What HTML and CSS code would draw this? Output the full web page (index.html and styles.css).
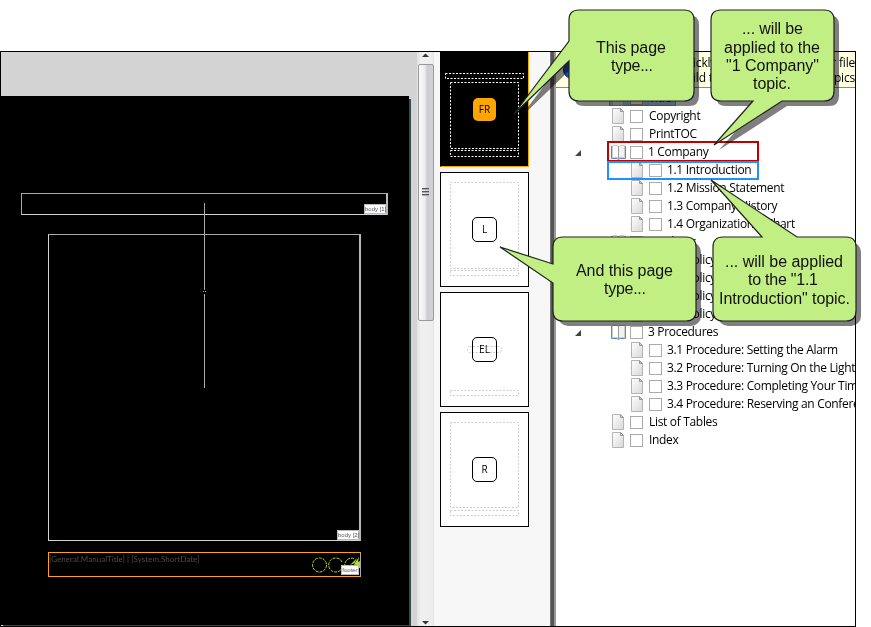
FILE: index.html
```html
<!DOCTYPE html>
<html lang="en">
<head>
<meta charset="utf-8">
<title>Page layout and TOC</title>
<link rel="stylesheet" href="styles.css">
</head>
<body>
<svg width="0" height="0" class="defs">
  <defs>
    <linearGradient id="sheet" x1="0" y1="0" x2="1" y2="1"><stop offset="0" stop-color="#fff"/><stop offset="1" stop-color="#d8d8d8"/></linearGradient>
    <symbol id="doc" viewBox="0 0 13 16"><path d="M.5 .5H8.500L11.500 3.500V15.500H.5Z" fill="url(#sheet)" stroke="#b4b4b4"/><path d="M8.500 .5V3.500H11.500Z" fill="#d0d0d0" stroke="#999"/></symbol>
    <symbol id="book" viewBox="0 0 15 16"><path d="M.5 2V14.500H6L7.500 15.500L9 14.500H14.500V2" fill="#eee" stroke="#5b8cc0"/><path d="M1.500 1.500H6L7.500 2.500V14.500L6 13.500H1.500Z" fill="#fff" stroke="#ccc"/><path d="M13.500 1.500H9L7.500 2.500V14.500L9 13.500H13.500Z" fill="#f1f1f1" stroke="#ccc"/><path d="M7.500 2V15.500" stroke="#999"/></symbol>
  </defs>
</svg>
<main class="window">
  <section class="canvas">
    <div class="page">
      <div class="frame body1"><span class="tag">body [1]</span></div>
      <div class="frame body2"><span class="tag">body [2]</span></div>
      <div class="frame footer">
        <span class="vars">[General.ManualTitle] | [System.ShortDate]</span>
        <svg class="rings" width="50" height="18" viewBox="0 0 50 18"><g fill="none" stroke="#b5d334" stroke-dasharray="3 1"><circle cx="8.500" cy="9" r="7"/><path d="M31 6A7 7 0 1 0 31 12"/><path d="M34 11A7 7 0 0 1 43 2.500"/></g><path d="M39 9L46 2L43 8L48 1L47 6L49 5V12H42L44 7Z" fill="#b5d334"/></svg>
        <span class="tag">footer</span>
      </div>
      <i class="divider"></i>
    </div>
  </section>
  <div class="scroll">
    <svg width="17" height="12" viewBox="0 0 17 12"><path d="M5 5L8.500 1.500L12 5Z" fill="#333"/></svg>
    <div class="thumb"><i></i><i></i><i></i></div>
    <svg class="down" width="17" height="6" viewBox="0 0 17 6"><path d="M5 1H12L8.500 4.500Z" fill="#333"/></svg>
  </div>
  <section class="cards">
    <div class="card first"><svg width="87" height="114"><g class="dash"><rect x="4.500" y="21.500" width="78" height="5"/><rect x="9.500" y="30.500" width="68" height="66"/><rect x="9.500" y="98.500" width="68" height="6"/></g></svg><b>FR</b></div>
    <div class="card"><svg width="87" height="113"><g class="dash"><rect x="9.500" y="9.500" width="68" height="86"/><rect x="9.500" y="97.500" width="68" height="5"/></g></svg><b>L</b></div>
    <div class="card"><svg width="87" height="113"><g class="dash"><rect x="9.500" y="97.500" width="68" height="5"/></g></svg><b>EL</b><svg class="under" width="87" height="113"><g class="dash"><rect x="26.500" y="53.500" width="34" height="6" rx="2"/></g></svg></div>
    <div class="card"><svg width="87" height="113"><g class="dash"><rect x="9.500" y="9.500" width="68" height="85"/><rect x="9.500" y="97.500" width="68" height="5"/></g></svg><b>R</b></div>
  </section>
  <div class="splitter"></div>
  <section class="outline">
    <header class="notice"><svg width="18" height="18" viewBox="0 0 18 18"><circle cx="9" cy="9" r="8.500" fill="#2448b8" stroke="#102a80"/></svg>
      <div class="lines"><p><span>ickly</span><span>r file</span></p><p><span>ild t</span><span>opics</span></p></div></header>
    <ul class="tree">
      <li><span class="sel"></span><svg class="doc"><use href="#doc"/></svg><i></i><span>Title</span></li>
      <li><svg class="doc"><use href="#doc"/></svg><i></i><span>Copyright</span></li>
      <li><svg class="doc"><use href="#doc"/></svg><i></i><span>PrintTOC</span></li>
      <li class="open"><svg class="book"><use href="#book"/></svg><i></i><span>1 Company</span></li>
      <li class="sub"><svg class="doc"><use href="#doc"/></svg><i></i><span>1.1 Introduction</span></li>
      <li class="sub"><svg class="doc"><use href="#doc"/></svg><i></i><span>1.2 Mission Statement</span></li>
      <li class="sub"><svg class="doc"><use href="#doc"/></svg><i></i><span>1.3 Company History</span></li>
      <li class="sub"><svg class="doc"><use href="#doc"/></svg><i></i><span>1.4 Organizational Chart</span></li>
      <li class="open"><svg class="book"><use href="#book"/></svg><i></i><span>2 Policies</span></li>
      <li class="sub"><svg class="doc"><use href="#doc"/></svg><i></i><span>2.1 Policy</span></li>
      <li class="sub"><svg class="doc"><use href="#doc"/></svg><i></i><span>2.2 Policy</span></li>
      <li class="sub"><svg class="doc"><use href="#doc"/></svg><i></i><span>2.3 Policy</span></li>
      <li class="sub"><svg class="doc"><use href="#doc"/></svg><i></i><span>2.4 Policy</span></li>
      <li class="open"><svg class="book"><use href="#book"/></svg><i></i><span>3 Procedures</span></li>
      <li class="sub"><svg class="doc"><use href="#doc"/></svg><i></i><span>3.1 Procedure: Setting the Alarm</span></li>
      <li class="sub"><svg class="doc"><use href="#doc"/></svg><i></i><span>3.2 Procedure: Turning On the Lights</span></li>
      <li class="sub"><svg class="doc"><use href="#doc"/></svg><i></i><span>3.3 Procedure: Completing Your Time</span></li>
      <li class="sub"><svg class="doc"><use href="#doc"/></svg><i></i><span>3.4 Procedure: Reserving an Conference</span></li>
      <li><svg class="doc"><use href="#doc"/></svg><i></i><span>List of Tables</span></li>
      <li><svg class="doc"><use href="#doc"/></svg><i></i><span>Index</span></li>
    </ul>
  </section>
</main>
<svg class="callouts" width="871" height="627" viewBox="0 0 871 627">
  <rect x="608" y="142" width="150" height="19" fill="none" stroke="#c00000" stroke-width="2"/>
  <rect x="608" y="162" width="150" height="17" fill="none" stroke="#1e90ff" stroke-width="2"/>
  <g class="shade">
    <path d="M584 15H689Q699 15 699 25V96Q699 106 689 106H584Q574 106 574 96V66L519 119L574 46V25Q574 15 584 15Z"/>
    <path d="M726 15H829Q839 15 839 25V96Q839 106 829 106H787L719 150L758 106H726Q716 106 716 96V25Q716 15 726 15Z"/>
    <rect x="558" y="242" width="143" height="84" rx="10"/>
    <rect x="718" y="242" width="143" height="84" rx="10"/>
  </g>
  <g class="bubble">
    <path d="M579 10H684Q694 10 694 20V91Q694 101 684 101H579Q569 101 569 91V61L514 114L569 41V20Q569 10 579 10Z"/>
    <path d="M721 10H824Q834 10 834 20V91Q834 101 824 101H782L714 145L753 101H721Q711 101 711 91V20Q711 10 721 10Z"/>
    <path d="M563 237H686Q696 237 696 247V311Q696 321 686 321H563Q553 321 553 311V283L500 247L553 264V247Q553 237 563 237Z"/>
    <path d="M723 237H762L711 180L797 237H846Q856 237 856 247V311Q856 321 846 321H723Q713 321 713 311V247Q713 237 723 237Z"/>
  </g>
  <g class="says">
    <text x="596" y="53" textLength="70">This page</text><text x="611" y="71" textLength="42">type...</text>
    <text x="742" y="34" textLength="61">... will be</text><text x="724" y="53" textLength="96">applied to the</text><text x="726" y="71" textLength="93">"1 Company"</text><text x="753" y="89" textLength="38">topic.</text>
    <text x="576" y="276" textLength="97">And this page</text><text x="604" y="294" textLength="42">type...</text>
    <text x="725" y="267" textLength="118">... will be applied</text><text x="748" y="285" textLength="70">to the "1.1</text><text x="719" y="304" textLength="131">Introduction" topic.</text>
  </g>
</svg>
</body>
</html>
```

FILE: styles.css
```css
* { box-sizing: border-box; }
body { margin: 0; padding-top: 51px; background: #fff; font: 12px "Open Sans", sans-serif; color: #000; height: 627px; overflow: hidden; }
.defs { position: absolute; }
.window { display: flex; width: 856px; height: 576px; border: 1px solid #000; overflow: hidden; }
.canvas { flex: 0 0 416px; background: #d3d3d3; padding-top: 44px; overflow: hidden; }
.page { position: relative; width: 408px; height: 529px; background: #000; box-shadow: 2px 3px 0 #2f4f4f; }
.frame { position: absolute; border: 1px solid #a9a9a9; border-bottom-color: #d3d3d3; }
.body1 { left: 20px; top: 97px; width: 367px; height: 22px; border-right: 2px solid #b8b8b8; }
.body2 { left: 47px; top: 138px; width: 313px; height: 307px; border-right: 2px solid #b8b8b8; border-left-color: #d3d3d3; }
.footer { left: 47px; top: 456px; width: 313px; height: 25px; border-color: #ffa500; border-right-color: #aaa; }
.tag { position: absolute; right: 0; bottom: 0; width: 22px; height: 10px; background: #fff; border: 1px solid #bbb; font: 6px/8px "Liberation Sans", sans-serif; color: #556; text-align: center; white-space: nowrap; }
.footer .tag { width: 18px; right: 1px; bottom: 1px; z-index: 1; }
.vars { display: block; font: 8px/13px Lato, sans-serif; color: #4c4c4c; letter-spacing: .03px; white-space: nowrap; }
.rings { position: absolute; left: 262px; top: 3px; }
.divider { position: absolute; left: 203px; top: 107px; width: 1px; height: 185px; background: linear-gradient(#a9a9a9 87px, #000 87px 91px, #a9a9a9 91px); }
.divider::after { content: ""; position: absolute; left: -1px; top: 88px; width: 3px; height: 1px; background: linear-gradient(90deg, #bbb 1px, #000 1px 2px, #bbb 2px); }
.scroll { flex: 0 0 17px; display: flex; flex-direction: column; background: linear-gradient(90deg, #e2e2e2, #f0f0f0 4px, #eee 15px, #e3e3e3); }
.scroll svg { display: block; }
.thumb { width: 16px; height: 257px; margin-left: 1px; border: 1px solid #999; border-radius: 2px; background: linear-gradient(90deg, #fafafa, #ececec 6px, #ccccd2 8px, #d2d2d6); display: flex; flex-direction: column; align-items: center; padding-top: 123px; gap: 1px; }
.thumb i { width: 7px; height: 2px; margin-right: 2px; border-bottom: 1px solid #aaa; background: #555; }
.scroll .down { margin-top: auto; }
.cards { flex: 0 0 116px; background: #f7f7f7; padding-left: 6px; display: flex; flex-direction: column; gap: 5px; }
.card { display: grid; place-items: center; width: 89px; height: 115px; flex: none; border: 1px solid #000; background: #fff; }
.card svg, .card b { grid-area: 1 / 1; }
.card .under { mix-blend-mode: multiply; }
.card b { width: 25px; height: 25px; border: 1px solid #000; border-radius: 5px; background: #fff; font: 10px/23px "Open Sans", sans-serif; text-align: center; color: #000; }
.dash { fill: none; stroke: #ccc; stroke-dasharray: 2 1.500; }
.first { background: #000; border-color: #000 #ffa500 #ffa500 #000; border-top: 0; }
.first .dash { stroke: #fff; }
.card.first b { width: 23px; height: 23px; border: 0; background: #ffa500; }
.splitter { flex: 0 0 6px; background: linear-gradient(90deg, #777 1px, #555 1px 4px, #999 4px); }
.outline { flex: 1; min-width: 0; background: #fff; overflow: hidden; }
.notice { height: 36px; background: #ffffe1; border-bottom: 1px solid #888; display: flex; align-items: center; padding-left: 7px; }
.lines { margin-left: 112px; flex: 1; }
.lines p { display: flex; justify-content: space-between; margin: 0; line-height: 15px; letter-spacing: -.2px; }
.tree { list-style: none; margin: 1px 0 0; padding: 0; }
.tree li { position: relative; display: flex; align-items: center; height: 18px; padding-left: 56px; white-space: nowrap; letter-spacing: -.32px; }
.tree li > span:last-child { line-height: 16px; padding: 1px 0; }
.tree .sub { padding-left: 75px; }
.tree .sub > span { margin-left: -1px; }
.tree svg, .tree i { flex: none; }
.doc { width: 13px; height: 16px; margin-right: 5px; }
.book { width: 15px; height: 16px; margin-right: 4px; }
.tree i { width: 13px; height: 13px; border: 1px solid #aaa; background: #fff; margin-right: 6px; }
.tree .open { padding-left: 55px; }
.tree .open > span { margin-left: -1px; }
.tree .open::before { content: ""; position: absolute; left: 19px; top: 7px; border-left: 6px solid transparent; border-bottom: 6px solid #444; }
.sel { position: absolute; left: 53px; top: 0; width: 67px; height: 17px; border: 1px solid #7da2ce; background: #a9c8ec; z-index: -1; }
.tree li:first-child { z-index: 0; }
.callouts { position: absolute; left: 0; top: 0; }
.shade { fill: #000; fill-opacity: .5; }
.bubble { fill: #c2ef83; stroke: #222; stroke-width: 1.200; }
.says { font: 16px "Liberation Sans", sans-serif; fill: #111; }
```
